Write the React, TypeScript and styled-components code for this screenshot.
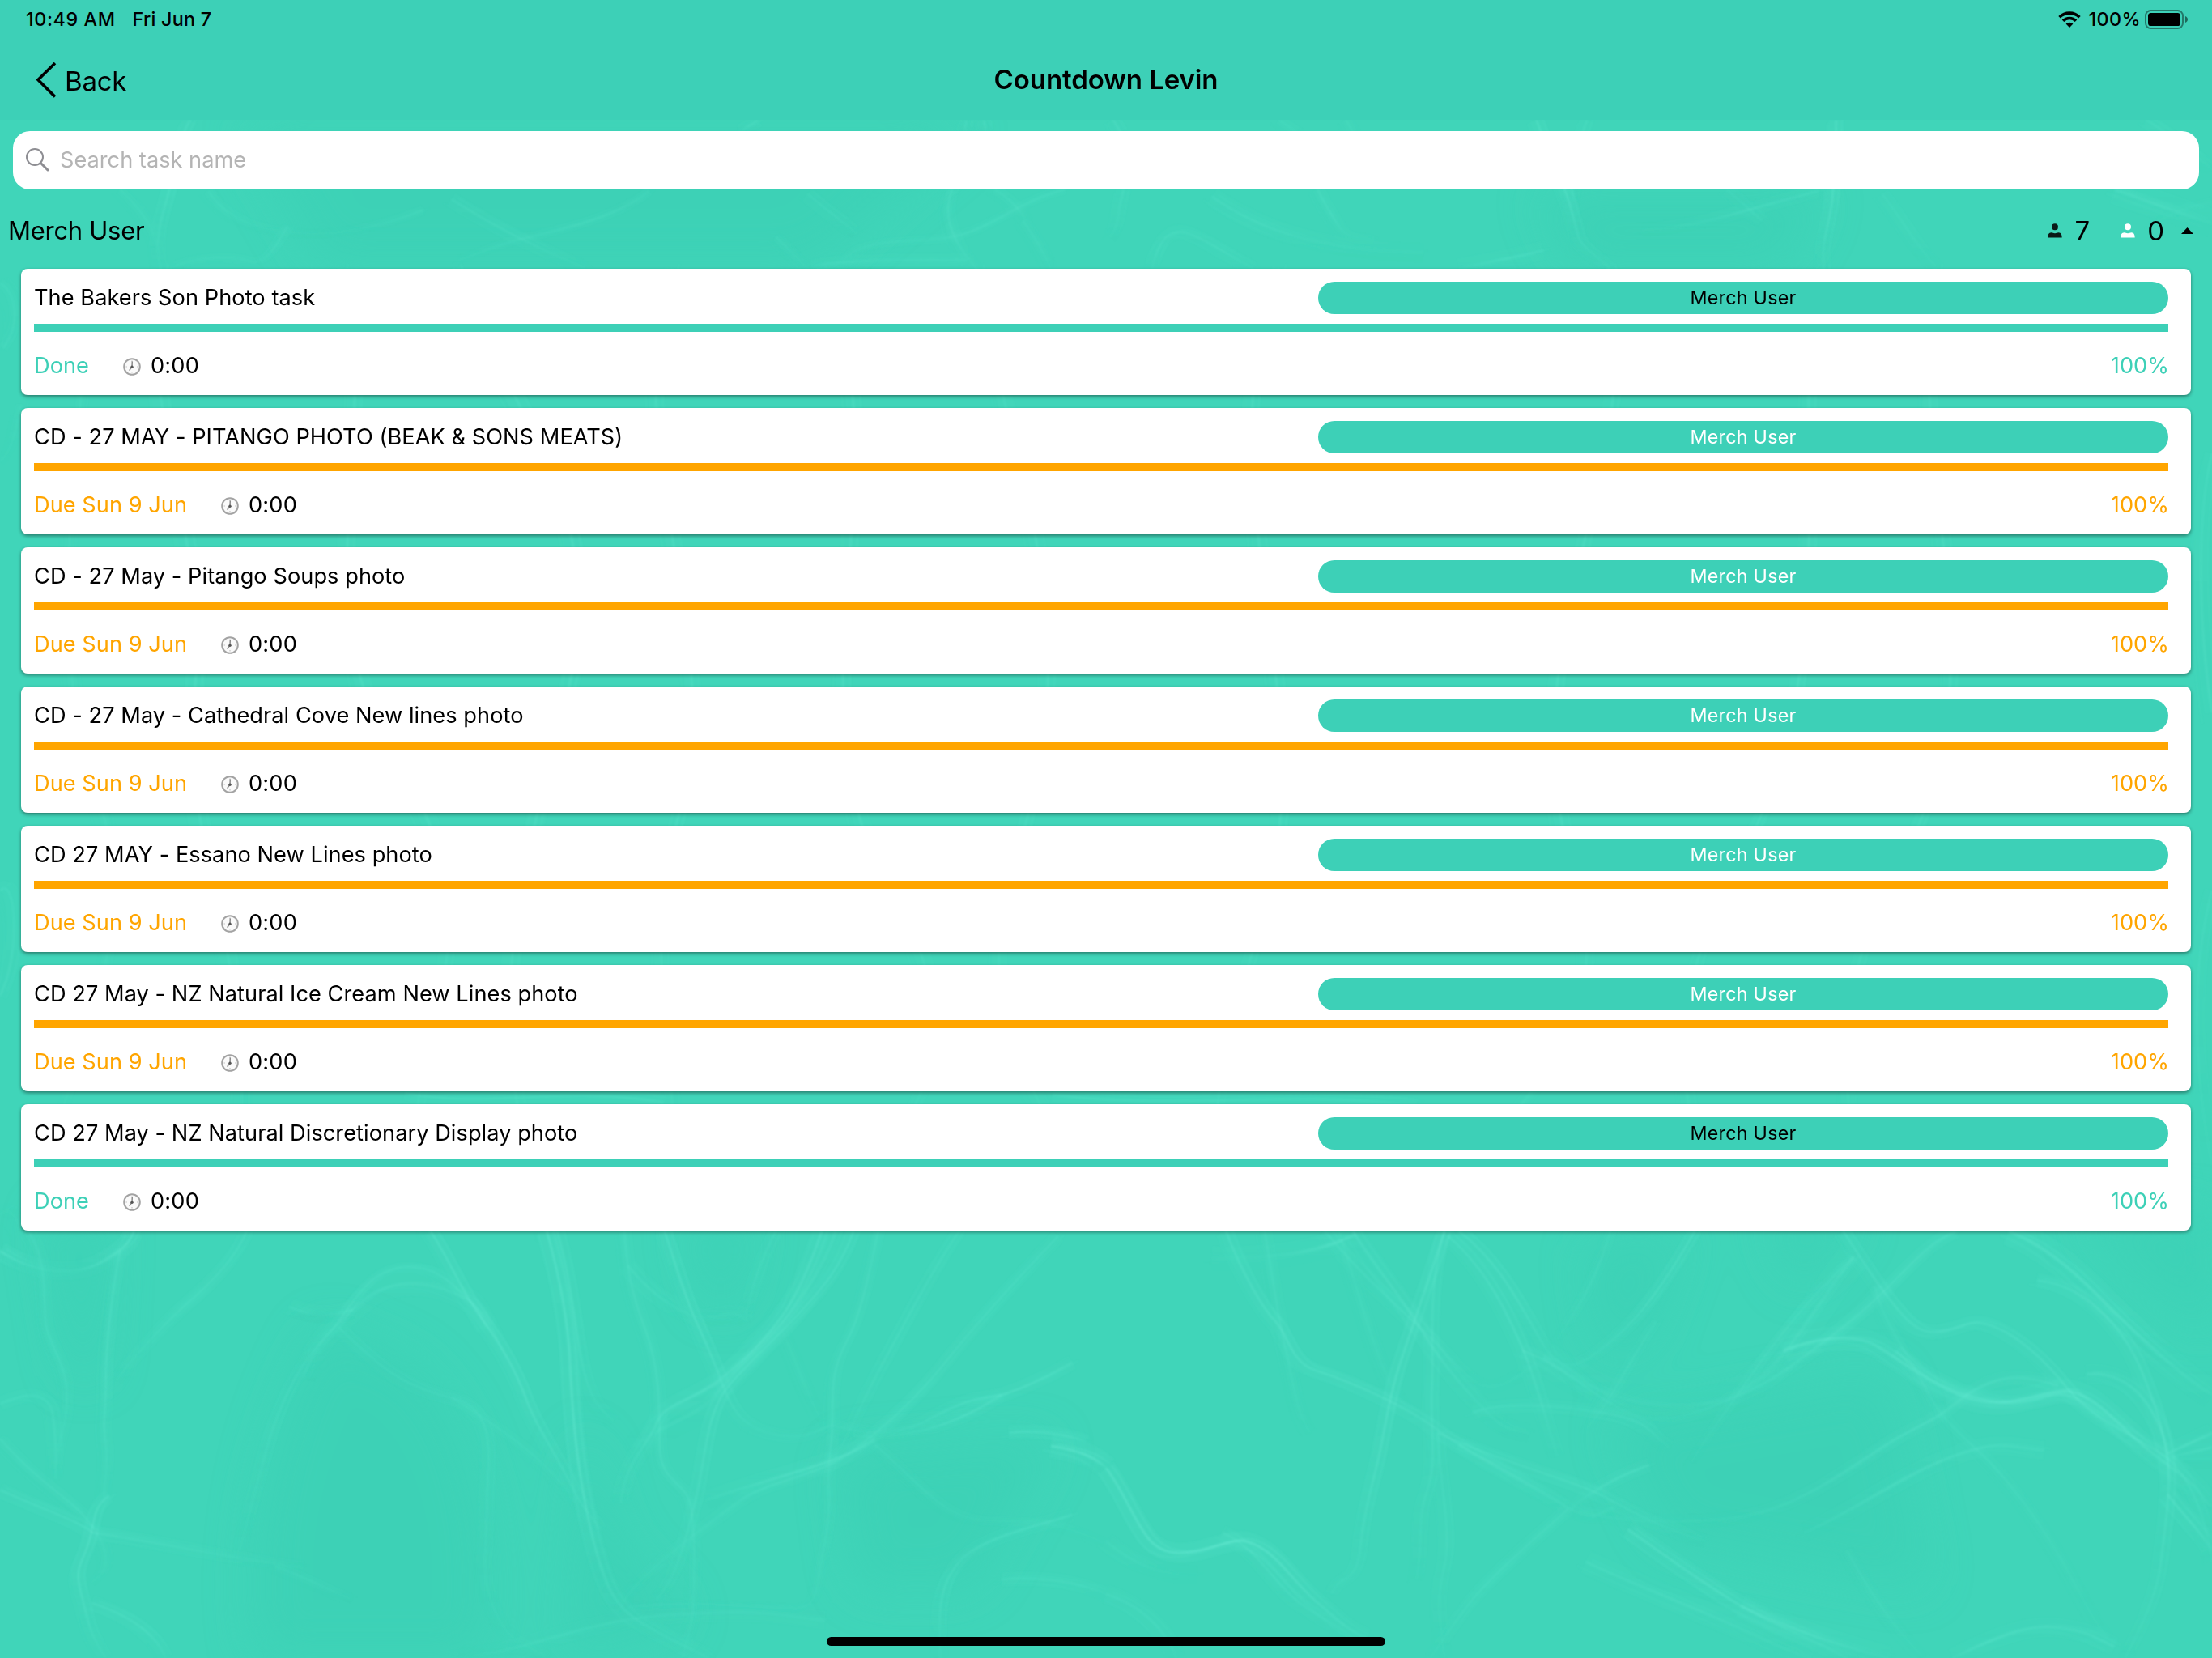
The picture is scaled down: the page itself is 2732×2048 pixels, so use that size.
import React from "react";
import styled, { createGlobalStyle } from "styled-components";

const TEAL = "#3dd0b7";
const ORANGE = "#ffa500";

const GlobalStyle = createGlobalStyle`
  *, *::before, *::after { box-sizing: border-box; }
  body {
    margin: 0;
    background: #40d5b9;
    color: #000;
    font-family: Inter, "Liberation Sans", sans-serif;
    font-size: 27.2px;
    -webkit-font-smoothing: antialiased;
  }
`;

const Screen = styled.div`
  position: relative;
  width: 2732px;
  height: 2048px;
  overflow: hidden;
  background: #40d5b9;
`;

const Backdrop = styled.svg`
  position: absolute;
  inset: 0;
  width: 100%;
  height: 100%;
`;

const Content = styled.div`
  position: relative;
  display: flex;
  flex-direction: column;
  height: 100%;
`;

const Header = styled.header`
  height: 148px;
  background: ${TEAL};
`;

const StatusBar = styled.div`
  display: flex;
  justify-content: space-between;
  align-items: center;
  height: 48px;
  padding: 0 30px 0 32px;
  font-size: 23.3px;
  font-weight: 500;
`;

const StatusGroup = styled.div<{ $gap: number }>`
  display: flex;
  align-items: center;
  gap: ${(p) => p.$gap}px;
`;

const StatusText = styled.span<{ $spacing: number }>`
  padding-bottom: 2px;
  letter-spacing: ${(p) => p.$spacing}px;
  white-space: nowrap;
`;

const NavBar = styled.div`
  display: grid;
  grid-template-columns: 1fr auto 1fr;
  align-items: center;
  height: 100px;
  padding: 0 44px;
`;

const BackButton = styled.button`
  display: flex;
  align-items: center;
  gap: 10px;
  padding: 0;
  border: 0;
  background: none;
  color: inherit;
  font: inherit;
  font-size: 33px;
  letter-spacing: -0.2px;
`;

const BackLabel = styled.span`
  padding-top: 4px;
`;

const Title = styled.h1`
  margin: 0;
  font-size: 33px;
  font-weight: 590;
  letter-spacing: -0.1px;
`;

const SearchBox = styled.label`
  display: flex;
  align-items: center;
  gap: 12px;
  height: 72px;
  margin: 14px 16px 0;
  padding-left: 16px;
  border-radius: 21px;
  background: #fff;
`;

const SearchInput = styled.input`
  flex: 1;
  height: 70px;
  padding: 0 0 2px;
  border: 0;
  outline: 0;
  background: transparent;
  font: inherit;
  &::placeholder { color: #b4b4b4; opacity: 1; }
`;

const SectionHeader = styled.div`
  display: flex;
  justify-content: space-between;
  align-items: center;
  height: 98px;
  padding: 3px 23px 0 10px;
`;

const SectionName = styled.h2`
  margin: 0;
  padding-bottom: 1px;
  font-size: 31px;
  font-weight: 400;
  letter-spacing: -0.28px;
`;

const Counters = styled.div`
  display: flex;
  align-items: center;
  gap: 21px;
`;

const Counter = styled.div`
  display: flex;
  align-items: center;
  gap: 15px;
  font-size: 33px;
  & + & { margin-left: 17px; }
`;

const TaskList = styled.main`
  display: flex;
  flex-direction: column;
  gap: 16px;
  padding: 0 26px;
`;

const Card = styled.article`
  height: 156px;
  padding: 16px 28px 0 16px;
  border-radius: 8px;
  background: #fff;
  box-shadow: 0 2px 4px rgba(0, 0, 0, 0.42);
`;

const CardTop = styled.div`
  display: grid;
  grid-template-columns: 1fr 1050px;
  align-items: center;
  height: 40px;
`;

const TaskName = styled.h3`
  margin: 0;
  padding-bottom: 2px;
  font-size: 27.2px;
  font-weight: 400;
  letter-spacing: 0.05px;
  white-space: nowrap;
`;

const Assignee = styled.div<{ $done: boolean }>`
  display: flex;
  align-items: center;
  justify-content: center;
  height: 40px;
  padding-bottom: 2px;
  border-radius: 20px;
  background: ${TEAL};
  color: ${(p) => (p.$done ? "#000" : "#fff")};
  font-size: 23.3px;
  letter-spacing: 0.25px;
`;

const Progress = styled.div<{ $color: string }>`
  height: 10px;
  margin-top: 12px;
  background: ${(p) => p.$color};
`;

const CardBottom = styled.div`
  display: flex;
  align-items: center;
  height: 38px;
  margin-top: 22px;
`;

const Status = styled.span<{ $color: string }>`
  color: ${(p) => p.$color};
  letter-spacing: 0.03px;
`;

const Timer = styled.span`
  display: flex;
  align-items: center;
  gap: 12px;
  margin-left: 42px;
  letter-spacing: 0.2px;
`;

const ClockSvg = styled.svg`
  margin-top: 4px;
`;

const Percent = styled(Status)`
  margin: 0 -1px 0 auto;
`;

const HomeIndicator = styled.div`
  width: 690px;
  height: 11px;
  margin: auto auto 15px;
  border-radius: 6px;
  background: #000;
`;

/* [path, stroke width, opacity] */
type Wisp = [string, number, number];

const bottomLeft: Wisp[] = [
  ["M0 180C50 260 110 270 150 210S185 130 190 112", 4, 0.5],
  ["M350 112C335 200 300 290 260 370C220 460 190 540 165 620", 3, 0.3],
  ["M170 180C160 300 150 500 150 620S145 760 150 840S145 980 148 1040", 2, 0.5],
  ["M40 112C70 220 60 350 65 430S95 560 95 680S75 850 80 960", 2, 0.35],
  ["M0 820C40 930 70 980 100 1040S150 1180 150 1230S140 1290 130 1310", 2, 0.35],
  ["M0 995C60 1060 120 1110 130 1140C240 1180 330 1230 430 1260", 3, 0.35],
  ["M155 1015C130 1050 135 1110 125 1180S105 1260 115 1350S125 1480 150 1568", 3, 0.45],
  ["M130 1380C180 1420 220 1480 235 1568", 3, 0.35],
  ["M390 1255C440 1300 470 1340 500 1370", 2, 0.2],
  ["M610 112C640 220 650 300 680 400S730 580 745 680S790 880 810 980S840 1080 850 1130", 3, 0.5],
  ["M775 112C790 240 805 400 808 560S815 840 825 980S845 1220 860 1310S900 1440 940 1490S990 1550 1005 1568", 4, 0.5],
  ["M790 112C810 280 815 440 825 560S850 720 870 760", 3, 0.35],
  ["M885 112C890 260 895 320 915 450S935 700 935 840S975 960 980 1060S985 1300 982 1400S970 1520 968 1568", 2, 0.4],
  ["M942 112C960 240 970 330 985 410S1010 540 1025 640S1060 790 1105 808S1160 780 1180 775", 3, 0.5],
  ["M1180 775C1210 790 1260 830 1320 750S1390 690 1420 670S1500 590 1520 560", 3, 0.35],
  ["M1210 810C1260 820 1330 810 1420 670", 3, 0.35],
  ["M1165 112C1150 220 1130 340 1100 430S1050 560 1020 620S940 700 930 770S885 900 880 1040", 4, 0.4],
  ["M1185 112C1165 260 1120 400 1090 470S1040 600 1010 680S920 780 900 860", 6, 0.22],
  ["M1210 112C1190 250 1160 320 1130 400S1060 560 1030 650S1000 900 985 1040S960 1290 930 1370", 3, 0.4],
  ["M1245 112C1230 280 1220 400 1200 490S1180 640 1180 750S1172 880 1175 1000S1165 1200 1160 1300S1140 1390 1130 1400C1060 1395 980 1370 890 1395", 2, 0.4],
  ["M1360 112C1320 250 1280 440 1250 570S1210 780 1180 900", 3, 0.25],
  ["M1500 130C1420 330 1380 440 1340 560S1260 770 1210 860S1090 960 1050 1030S900 1290 880 1390", 3, 0.3],
  ["M1240 820C1200 900 1080 960 1000 1030", 4, 0.3],
  ["M480 420C510 320 530 240 575 235S640 290 670 360S700 460 720 560", 2, 0.4],
  ["M430 620C440 500 490 400 520 340S600 280 640 320S670 360 690 440", 5, 0.2],
  ["M480 425C420 560 390 740 375 880S350 1100 340 1200", 3, 0.22],
  ["M480 440C540 580 570 640 640 680S690 900 690 1060S680 1280 700 1400S750 1530 780 1568", 3, 0.2],
  ["M640 680C720 800 780 900 820 1050", 2, 0.2],
  ["M410 370C450 410 470 400 500 380", 4, 0.2],
  ["M1430 800C1480 790 1520 810 1540 830", 3, 0.4],
  ["M1490 845C1530 860 1550 880 1568 920", 5, 0.55],
  ["M1568 1180C1520 1120 1480 1100 1410 1100S1320 1010 1240 840", 2, 0.22],
  ["M1333 1568C1330 1420 1330 1320 1360 1240S1450 1130 1520 1080", 3, 0.3],
  ["M1420 1300C1480 1290 1530 1310 1568 1350", 3, 0.25],
  ["M890 230C920 320 950 370 980 400S1040 360 1060 420", 4, 0.22],
  ["M1100 112C1070 250 1065 330 1055 420", 3, 0.2],
  ["M0 700C40 660 70 660 75 740S80 880 78 960", 3, 0.25],
  ["M1110 460C1130 560 1140 660 1170 780", 2, 0.15],
  ["M650 1568C760 1540 820 1440 960 1420S1120 1430 1170 1440", 4, 0.15],
];

const bottomRight: Wisp[] = [
  ["M170 112C190 240 220 370 240 420S260 560 300 590S420 700 470 790S600 980 650 1050S700 1060 720 1055", 3, 0.45],
  ["M225 112C235 260 245 420 255 520S270 740 290 800", 2, 0.35],
  ["M310 112C350 230 400 340 440 430S490 560 520 620S590 600 610 560", 3, 0.28],
  ["M350 112C380 230 420 340 450 460S520 680 540 730S570 790 600 800", 4, 0.32],
  ["M330 112C350 260 370 440 390 560S420 700 440 740", 2, 0.22],
  ["M480 112C460 260 440 400 420 540S395 800 385 900S365 1080 360 1200S330 1280 320 1350", 3, 0.5],
  ["M480 112C455 300 465 500 462 640S470 900 455 1000S450 1180 440 1300", 3, 0.35],
  ["M470 800C475 1000 490 1150 480 1250S470 1400 480 1568", 3, 0.22],
  ["M485 130C540 240 570 400 590 510S620 730 640 880", 3, 0.38],
  ["M500 112C560 220 590 380 620 500S680 560 720 480S800 260 835 112", 3, 0.4],
  ["M715 112C700 240 680 340 640 480", 2, 0.25],
  ["M590 520C650 570 690 680 740 730S830 740 890 680S980 560 1050 430S1150 170 1205 112", 3, 0.38],
  ["M620 540C700 690 790 740 870 690S1000 380 1060 200", 7, 0.22],
  ["M780 420C740 560 720 680 680 790", 2, 0.25],
  ["M1060 200C1000 330 950 480 910 620S860 780 830 900", 2, 0.3],
  ["M1045 112C1080 240 1100 320 1130 400S1180 460 1220 430S1320 520 1360 640S1460 810 1500 880S1560 1100 1568 1240", 3, 0.4],
  ["M1090 300C1100 420 1140 540 1160 640S1200 780 1240 870S1330 1120 1370 1300S1400 1430 1420 1500", 2, 0.25],
  ["M960 520C1000 480 1060 460 1090 500S1170 640 1220 680S1300 680 1350 660S1430 780 1500 900S1550 1030 1568 1050", 5, 0.42],
  ["M1120 520C1150 600 1190 660 1250 690S1330 660 1360 670S1420 770 1470 830", 3, 0.4],
  ["M1280 112C1350 180 1400 320 1430 390S1520 600 1568 670", 6, 0.42],
  ["M1320 280C1400 300 1450 480 1470 600S1500 800 1505 900S1500 1150 1495 1250S1470 1450 1445 1568", 3, 0.4],
  ["M1390 600C1440 590 1470 660 1490 760S1505 900 1510 1000", 4, 0.32],
  ["M1505 1010C1530 1090 1550 1130 1568 1200", 4, 0.4],
  ["M470 800C560 900 660 960 700 1010S780 1120 850 1170", 3, 0.32],
  ["M500 840C560 920 620 1000 660 1060C680 1010 730 940 770 910", 3, 0.32],
  ["M655 1060C600 1180 560 1260 530 1340S480 1500 460 1568", 3, 0.28],
  ["M670 1070C760 1120 870 1110 930 1070S1050 930 1100 850S1170 770 1210 690S1290 590 1350 640", 3, 0.35],
  ["M740 1130C800 1230 850 1320 900 1390S1000 1500 1050 1568", 4, 0.42],
  ["M900 1390C960 1460 1030 1520 1110 1568", 5, 0.32],
  ["M680 1240C760 1330 860 1420 920 1490S980 1550 1000 1568", 5, 0.22],
  ["M990 1140C1060 1070 1130 940 1200 880S1280 850 1330 860", 4, 0.25],
  ["M1050 1200C1080 1330 1110 1450 1160 1568", 2, 0.2],
  ["M1200 1568C1250 1510 1300 1450 1350 1465S1400 1500 1430 1530", 4, 0.28],
  ["M520 730C560 700 620 700 700 730S770 810 800 850", 3, 0.25],
  ["M1505 870L1568 800M1505 885L1568 850M1505 890L1568 890", 4, 0.3],
  ["M150 205C230 210 300 190 355 120", 5, 0.25],
  ["M0 920C25 1000 40 1100 60 1160S110 1220 150 1190S200 1160 225 1200S270 1320 300 1380S340 1470 370 1500", 4, 0.55],
  ["M165 1140C210 1190 230 1280 260 1350S320 1440 350 1500", 3, 0.3],
  ["M0 1350C40 1380 80 1450 100 1568", 4, 0.2],
  ["M0 1170C40 1250 80 1290 130 1285", 4, 0.15],
];

const topLeft: Wisp[] = [
  ["M270 6C255 60 245 200 240 264S215 440 228 558", 3, 0.35],
  ["M170 264C205 350 220 420 222 480", 2, 0.2],
  ["M295 270C320 370 360 410 420 425S540 400 600 340", 2, 0.22],
  ["M640 300C700 400 760 480 830 555", 3, 0.25],
  ["M920 270C880 360 800 410 750 440S680 500 650 525", 2, 0.25],
  ["M1145 280C1170 340 1200 390 1215 430", 3, 0.2],
  ["M1350 264C1335 360 1350 460 1385 558", 2, 0.4],
  ["M1195 540C1205 470 1240 460 1320 450S1440 300 1510 265", 2, 0.28],
  ["M1410 264C1440 310 1450 360 1455 380", 2, 0.25],
  ["M240 555C280 510 330 510 355 530S400 430 408 400", 2, 0.28],
  ["M1150 550C1180 530 1250 524 1370 528", 3, 0.22],
  ["M1100 440L1145 558M1450 380C1470 450 1480 500 1490 558", 2, 0.22],
  ["M1075 6L1050 50M1370 6L1368 50M1395 6L1398 50", 3, 0.25],
];

const topRight: Wisp[] = [
  ["M10 6L20 50M25 264C15 350 20 400 5 440", 3, 0.3],
  ["M300 264C310 320 320 360 330 400S350 440 380 450", 2, 0.35],
  ["M150 290C210 400 290 490 450 500", 4, 0.22],
  ["M610 6C630 150 640 200 650 264S665 400 670 440S700 520 715 558", 3, 0.42],
  ["M682 6C670 80 665 200 660 330", 3, 0.25],
  ["M1035 6C1035 100 1032 200 1030 290S1012 460 1018 558", 3, 0.45],
  ["M760 415C850 400 900 340 1010 270", 3, 0.22],
  ["M65 558C75 450 90 400 120 430S180 520 210 558", 3, 0.25],
  ["M1100 280C1130 380 1150 480 1180 558M880 264L930 380", 3, 0.18],
  ["M1430 264C1480 310 1520 350 1568 390", 6, 0.28],
  ["M1475 6C1520 80 1550 150 1568 190", 3, 0.25],
  ["M1480 400C1510 350 1530 330 1568 310M340 6L350 50M245 6L270 50", 2, 0.22],
  ["M500 556C550 530 590 510 620 490", 4, 0.2],
];

/* filaments running behind the cards, seen in the gaps and margins */
const middle: Wisp[] = [
  ["M0 350C20 360 26 400 4 430M0 570C14 560 20 530 26 500", 2, 0.25],
  ["M100 488C90 640 60 800 120 980S90 1300 30 1520", 2, 0.22],
  ["M198 332C170 520 260 660 240 860S330 1180 290 1500", 4, 0.25],
  ["M420 332C480 560 360 740 500 960S460 1300 530 1520", 3, 0.3],
  ["M560 332C620 500 760 620 700 860S590 1240 675 1520", 4, 0.25],
  ["M830 332C760 560 900 780 840 1000S860 1340 820 1520", 3, 0.3],
  ["M1010 332C1130 560 960 860 1100 1100S1070 1400 1050 1520", 3, 0.28],
  ["M1206 332C1240 560 1350 760 1260 1040S1340 1340 1310 1520", 3, 0.25],
  ["M1580 332C1480 600 1640 860 1560 1130S1500 1400 1520 1520", 3, 0.28],
  ["M1986 332C2040 560 1860 800 1940 1060S1830 1350 1790 1520", 3, 0.3],
  ["M2252 332C2200 520 2290 800 2150 1060S2130 1400 2090 1520", 3, 0.3],
  ["M2390 332C2350 600 2480 820 2350 1060S2320 1380 2275 1520", 3, 0.25],
  ["M2732 560C2712 640 2716 780 2732 880M2732 1100C2700 1220 2716 1360 2732 1440", 3, 0.25],
  ["M0 1100C20 1080 26 1180 0 1230M0 1500C10 1490 20 1500 26 1520", 3, 0.25],
  ["M500 1350C600 1370 700 1340 820 1362M1300 1352C1450 1372 1600 1345 1750 1366", 3, 0.25],
];

function Wisps({ items, transform }: { items: Wisp[]; transform?: string }) {
  return (
    <g transform={transform}>
      {items.map(([d, width, opacity]) => (
        <g key={d}>
          <path d={d} strokeWidth={width * 6} opacity={opacity * 0.14} vectorEffect="non-scaling-stroke" />
          <path d={d} strokeWidth={width * 0.7} opacity={opacity * 0.62} vectorEffect="non-scaling-stroke" />
          <path d={d} transform="translate(9 -6)" strokeWidth={width * 0.5} opacity={opacity * 0.3} vectorEffect="non-scaling-stroke" />
          <path d={d} transform="translate(-12 14)" strokeWidth={width * 0.6} opacity={opacity * 0.17} vectorEffect="non-scaling-stroke" />
        </g>
      ))}
    </g>
  );
}

function SmokeBackdrop() {
  return (
    <Backdrop viewBox="0 0 2732 2048" aria-hidden="true">
      <defs>
        <filter id="soft" x="0" y="0" width="2732" height="2048" filterUnits="userSpaceOnUse">
          <feGaussianBlur stdDeviation="1" />
        </filter>
        <filter id="haze" x="-300" y="0" width="3332" height="2300" filterUnits="userSpaceOnUse">
          <feGaussianBlur stdDeviation="30" />
        </filter>
        <linearGradient id="fade" x1="0" y1="0" x2="0" y2="1">
          <stop offset="0" stopColor="#74f3dd" stopOpacity="0.85" />
          <stop offset="0.5" stopColor="#74f3dd" />
          <stop offset="1" stopColor="#74f3dd" stopOpacity="0.25" />
        </linearGradient>
      </defs>
      <g filter="url(#haze)" fill="#3acfb4" opacity="0.5">
        <path d="M850 1500L930 1500L905 1620L870 1600Z" />
        <path d="M400 1640C330 1760 300 1900 320 2048H600C620 1900 590 1740 500 1680Z" />
        <path d="M1960 1540L2080 1520L2030 1660L1980 1670Z" />
        <path d="M2180 1500H2300L2220 1590Z" />
        <path d="M2560 1500H2732V1650Z" />
        <path d="M60 1500H130L120 1700L90 1700Z" />
        <path d="M1990 1760L2330 1700L2380 1960L2060 1900Z" />
        <path d="M720 1760L760 1900L850 2000L700 2048Z" />
        <path d="M1040 1800L1300 1780L1200 1960L1060 1960Z" />
        <path d="M300 160H1200L1000 330H400Z" />
        <path d="M1900 240H2250L2200 330H1950Z" />
      </g>
      <g filter="url(#soft)" fill="none" stroke="url(#fade)">
        <Wisps items={middle} />
        <Wisps items={topLeft} transform="translate(0 146) scale(0.8712 0.3333)" />
        <Wisps items={topRight} transform="translate(1366 146) scale(0.8712 0.3333)" />
        <Wisps items={bottomLeft} transform="translate(0 1480) scale(0.8712 0.3622)" />
        <Wisps items={bottomRight} transform="translate(1366 1480) scale(0.8712 0.3622)" />
      </g>
    </Backdrop>
  );
}

function WifiIcon() {
  return (
    <svg width="28" height="20" viewBox="0 0 28 20">
      <g fill="none" stroke="#000" strokeWidth="3.6">
        <path d="M1.6 7.2A17.6 17.6 0 0 1 26.4 7.2" />
        <path d="M6 11.8A11.4 11.4 0 0 1 22 11.8" />
      </g>
      <path d="M9.6 15.6A6.2 6.2 0 0 1 18.4 15.6L14 20Z" />
    </svg>
  );
}

function BatteryIcon() {
  return (
    <svg width="53" height="24" viewBox="0 0 53 24">
      <rect x="1" y="1" width="46" height="22" rx="6.5" fill="none" stroke="#000" strokeOpacity="0.42" strokeWidth="2" />
      <rect x="4" y="4" width="40" height="16" rx="3.6" />
      <path d="M50 8C52 9 53 10.400 53 12S52 15 50 16Z" fillOpacity="0.5" />
    </svg>
  );
}

function ChevronIcon() {
  return (
    <svg width="26" height="48" viewBox="0 0 26 48" fill="none" stroke="#000" strokeWidth="3.6">
      <path d="M24 4L3 24.500L24 45.500" />
    </svg>
  );
}

function SearchIcon() {
  return (
    <svg width="30" height="30" viewBox="0 0 30 30" fill="none" stroke="#8e8e93">
      <circle cx="11" cy="11" r="10" strokeWidth="2" />
      <path d="M18.200 18.200L27 27" strokeWidth="3" strokeLinecap="round" />
    </svg>
  );
}

function PersonIcon({ color }: { color: string }) {
  return (
    <svg width="18" height="18" viewBox="0 0 18 18" fill={color}>
      <circle cx="9" cy="4.300" r="4" />
      <path d="M0.300 17.600C0.300 14 1.500 11.400 4.500 11.300C6.500 11.300 7 12.200 9 12.200S11.500 11.300 13.500 11.300C16.500 11.400 17.700 14 17.700 17.600Z" />
    </svg>
  );
}

function ArrowUpIcon() {
  return (
    <svg width="15" height="8" viewBox="0 0 15 8">
      <path d="M0 8L7.500 0L15 8Z" />
    </svg>
  );
}

function ClockIcon() {
  return (
    <ClockSvg width="22" height="22" viewBox="0 0 22 22" fill="none">
      <circle cx="11" cy="11" r="9.800" fill="#fafafa" stroke="#a3a3a3" strokeWidth="2" />
      <path d="M11 3.500V5M11 17V18.500M3.500 11H5M17 11H18.500" stroke="#c4c4c4" strokeWidth="1.200" />
      <path d="M11.300 4.500L11 11.200L7.600 15.600" stroke="#8a8a8a" strokeWidth="1.500" />
      <circle cx="11" cy="11.200" r="1.700" fill="#555" />
    </ClockSvg>
  );
}

const tasks = [
  { name: "The Bakers Son Photo task", status: "Done" },
  { name: "CD - 27 MAY - PITANGO PHOTO (BEAK & SONS MEATS)", status: "Due Sun 9 Jun" },
  { name: "CD - 27 May - Pitango Soups photo", status: "Due Sun 9 Jun" },
  { name: "CD - 27 May - Cathedral Cove New lines photo", status: "Due Sun 9 Jun" },
  { name: "CD 27 MAY - Essano New Lines photo", status: "Due Sun 9 Jun" },
  { name: "CD 27 May - NZ Natural Ice Cream New Lines photo", status: "Due Sun 9 Jun" },
  { name: "CD 27 May - NZ Natural Discretionary Display photo", status: "Done" },
];

function TaskCard({ name, status }: { name: string; status: string }) {
  const done = status === "Done";
  const color = done ? TEAL : ORANGE;
  return (
    <Card>
      <CardTop>
        <TaskName>{name}</TaskName>
        <Assignee $done={done}>Merch User</Assignee>
      </CardTop>
      <Progress $color={color} />
      <CardBottom>
        <Status $color={color}>{status}</Status>
        <Timer>
          <ClockIcon />
          0:00
        </Timer>
        <Percent $color={color}>100%</Percent>
      </CardBottom>
    </Card>
  );
}

export default function App() {
  return (
    <Screen>
      <GlobalStyle />
      <SmokeBackdrop />
      <Content>
        <Header>
          <StatusBar>
            <StatusGroup $gap={21}>
              <StatusText $spacing={0.6}>10:49 AM</StatusText>
              <StatusText $spacing={0.25}>Fri Jun 7</StatusText>
            </StatusGroup>
            <StatusGroup $gap={5}>
              <StatusGroup $gap={10}>
                <WifiIcon />
                <StatusText $spacing={0.4}>100%</StatusText>
              </StatusGroup>
              <BatteryIcon />
            </StatusGroup>
          </StatusBar>
          <NavBar>
            <BackButton>
              <ChevronIcon />
              <BackLabel>Back</BackLabel>
            </BackButton>
            <Title>Countdown Levin</Title>
          </NavBar>
        </Header>
        <SearchBox>
          <SearchIcon />
          <SearchInput placeholder="Search task name" />
        </SearchBox>
        <SectionHeader>
          <SectionName>Merch User</SectionName>
          <Counters>
            <Counter>
              <PersonIcon color="#0b1a17" />
              <span>7</span>
            </Counter>
            <Counter>
              <PersonIcon color="#fff" />
              <span>0</span>
            </Counter>
            <ArrowUpIcon />
          </Counters>
        </SectionHeader>
        <TaskList>
          {tasks.map((task) => (
            <TaskCard key={task.name} {...task} />
          ))}
        </TaskList>
        <HomeIndicator />
      </Content>
    </Screen>
  );
}
